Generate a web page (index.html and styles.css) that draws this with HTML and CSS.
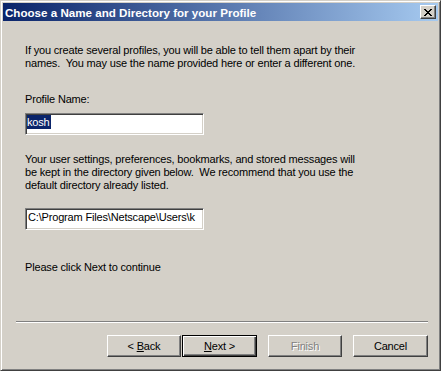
FILE: index.html
```html
<!DOCTYPE html>
<html>
<head>
<meta charset="utf-8">
<link rel="stylesheet" href="styles.css">
</head>
<body>
<div class="window">
  <div class="titlebar">
    <span class="title">Choose a Name and Directory for your Profile</span>
    <span class="close">
      <svg width="8" height="7" viewBox="0 0 8 7"><path d="M0 0h2v1h1v1h2v-1h1v-1h2v1h-1v1h-1v1h-1v1h1v1h1v1h1v1h-2v-1h-1v-1h-2v1h-1v1h-2v-1h1v-1h1v-1h1v-1h-1v-1h-1v-1h-1z" fill="#000"/></svg>
    </span>
  </div>
  <div class="client">
    <p class="text p1">If you create several profiles, you will be able to tell them apart by their names.&nbsp; You may use the name provided here or enter a different one.</p>
    <p class="text label">Profile Name:</p>
    <div class="field f1"><span class="sel">kosh</span></div>
    <p class="text p2">Your user settings, preferences, bookmarks, and stored messages will be kept in the directory given below.&nbsp; We recommend that you use the default directory already listed.</p>
    <div class="field f2"><span class="val">C:\Program Files\Netscape\Users\k</span></div>
    <p class="text p3">Please click Next to continue</p>
    <div class="sep"></div>
    <div class="buttons">
      <button class="btn back">&lt; <u>B</u>ack</button>
      <button class="btn next default"><u>N</u>ext &gt;</button>
      <button class="btn finish" disabled>Finish</button>
      <button class="btn cancel">Cancel</button>
    </div>
  </div>
</div>
</body>
</html>
```
FILE: styles.css
```css
html, body {
  margin: 0;
  padding: 0;
  background: #D4D0C8;
}
.window {
  width: 441px;
  height: 371px;
  box-sizing: border-box;
  border: 1px solid;
  border-color: #D4D0C8 #404040 #404040 #D4D0C8;
  box-shadow: inset 1px 1px 0 #FFFFFF, inset -1px -1px 0 #808080;
  padding: 2px;
  background: #D4D0C8;
  display: flex;
  flex-direction: column;
  font-family: "Liberation Sans", Arial, sans-serif;
  font-size: 11px;
  color: #000;
}
.titlebar {
  height: 18px;
  flex: none;
  display: flex;
  align-items: center;
  background: linear-gradient(to right, #0A246A, #A6CAF0);
  padding-left: 2px;
}
.title {
  flex: 1;
  color: #fff;
  font-weight: bold;
  font-size: 11.6px;
  white-space: nowrap;
}
.close {
  width: 16px;
  height: 14px;
  box-sizing: border-box;
  margin-right: 2px;
  background: #D4D0C8;
  border: 1px solid;
  border-color: #FFFFFF #404040 #404040 #FFFFFF;
  box-shadow: inset -1px -1px 0 #808080;
  display: flex;
  align-items: center;
  justify-content: center;
}
.close svg { display: block; margin-left: -1px; }
.client {
  flex: 1;
  display: flex;
  flex-direction: column;
  padding: 23px 10px 0 22px;
}
.text {
  margin: 0;
  line-height: 13px;
  letter-spacing: -0.17px;
}
.p1 { width: 338px; }
.label { margin-top: 23px; }
.field {
  width: 179px;
  height: 22px;
  box-sizing: border-box;
  background: #fff;
  border: 1px solid;
  border-color: #808080 #FFFFFF #FFFFFF #808080;
  box-shadow: inset 1px 1px 0 #404040, inset -1px -1px 0 #D4D0C8;
  padding: 1px 1px 0 1px;
  overflow: hidden;
  white-space: nowrap;
  line-height: 14px;
  letter-spacing: -0.17px;
}
.f1 { margin-top: 7px; }
.sel {
  display: inline-block;
  background: #0A246A;
  color: #fff;
  height: 14px;
  padding-right: 1px;
}
.f2 { margin-top: 16px; }
.val { display: inline-block; padding-left: 1px; }
.p2 { margin-top: 18px; width: 338px; }
.p3 { margin-top: 31px; }
.sep {
  margin: 47px 0 0 -9px;
  height: 0;
  border-top: 1px solid #808080;
  border-bottom: 1px solid #FFFFFF;
}
.buttons {
  margin-top: 12px;
  display: flex;
  justify-content: flex-end;
}
.btn {
  height: 22px;
  box-sizing: border-box;
  padding: 0;
  margin: 0;
  font-family: "Liberation Sans", Arial, sans-serif;
  font-size: 11px;
  letter-spacing: -0.17px;
  color: #000;
  background: #D4D0C8;
  border: 1px solid;
  border-color: #FFFFFF #404040 #404040 #FFFFFF;
  box-shadow: inset -1px -1px 0 #808080;
  border-radius: 0;
}
.back { width: 74px; }
.next { width: 75px; margin-left: 1px; }
.finish { width: 74px; margin-left: 11px; color: #808080; text-shadow: 1px 1px 0 #FFFFFF; }
.cancel { width: 75px; margin-left: 11px; }
.default {
  border: 1px solid #000;
  box-shadow: inset 1px 1px 0 #FFFFFF, inset -1px -1px 0 #404040, inset -2px -2px 0 #808080;
}
```
